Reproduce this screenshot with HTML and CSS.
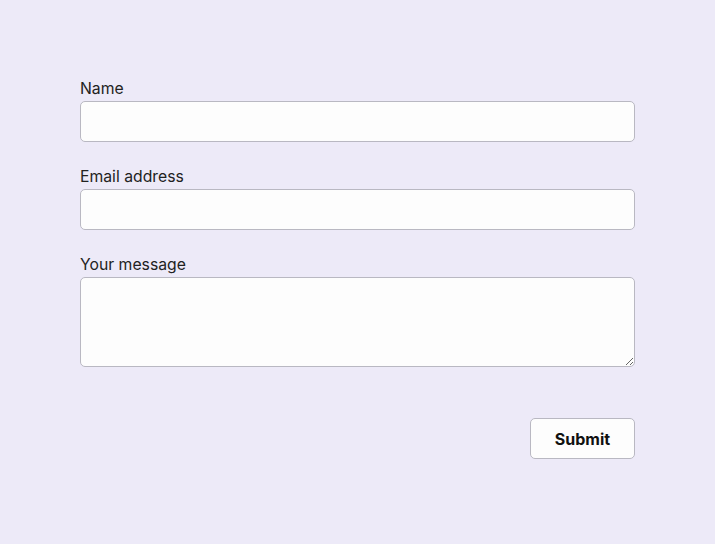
FILE: index.html
```html
<!DOCTYPE html>
<html lang="en">
<head>
<meta charset="utf-8">
<title>Contact</title>
<link rel="stylesheet" href="styles.css">
</head>
<body>
<form class="form">
  <div class="field">
    <label class="label" for="name">Name</label>
    <input class="input" id="name" type="text">
  </div>
  <div class="field">
    <label class="label" for="email">Email address</label>
    <input class="input" id="email" type="email">
  </div>
  <div class="field">
    <label class="label" for="msg">Your message</label>
    <textarea class="input textarea" id="msg"></textarea>
  </div>
  <div class="actions">
    <button class="btn" type="submit">Submit</button>
  </div>
</form>
</body>
</html>
```
FILE: styles.css
```css
html, body {
  margin: 0;
  padding: 0;
  background: #edeaf8;
  font-family: Inter, "Noto Sans", sans-serif;
  color: #222;
}
body {
  height: 544px;
  overflow: hidden;
}
.form {
  width: 555px;
  margin: 0 auto 0 80px;
  padding-top: 78px;
  display: flex;
  flex-direction: column;
  gap: 24px;
}
.field {
  display: flex;
  flex-direction: column;
  gap: 2px;
}
.label {
  font-size: 15.75px;
  line-height: 21px;
  color: #222;
}
.input {
  box-sizing: border-box;
  width: 100%;
  height: 41px;
  border: 1px solid #b9b8c2;
  border-radius: 5px;
  background: #fdfdfd;
  font-family: inherit;
  font-size: 15px;
  padding: 8px 10px;
  margin: 0;
}
.textarea {
  height: 90px;
  resize: vertical;
  display: block;
}
.actions {
  display: flex;
  justify-content: flex-end;
  margin-top: 27px;
}
.btn {
  box-sizing: border-box;
  width: 105px;
  height: 41px;
  border: 1px solid #b9b8c2;
  border-radius: 5px;
  background: #fdfdfd;
  font-family: inherit;
  font-size: 16px;
  font-weight: 700;
  color: #111;
  cursor: pointer;
}
```
